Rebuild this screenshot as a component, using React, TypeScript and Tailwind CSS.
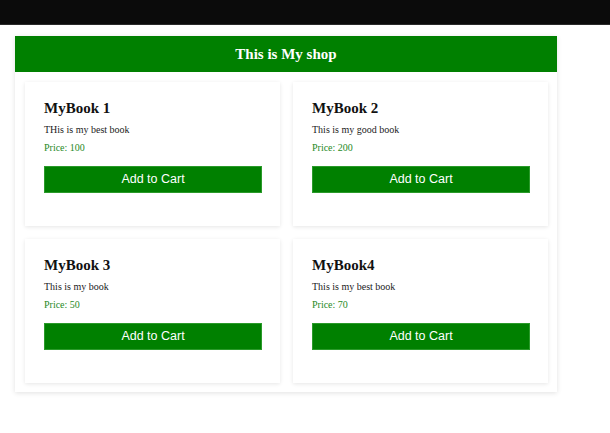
import React from "react";

const books = [
  { title: "MyBook 1", desc: "THis is my best book", price: 100 },
  { title: "MyBook 2", desc: "This is my good book", price: 200 },
  { title: "MyBook 3", desc: "This is my book", price: 50 },
  { title: "MyBook4", desc: "This is my best book", price: 70 },
];

export default function App() {
  return (
    <div className="w-[610px] h-[433px] bg-white overflow-hidden" style={{ fontFamily: '"Liberation Serif", serif' }}>
      <div className="h-[25px] bg-[#0b0b0b] border-b border-[#2a2a2a]" />
      <div className="pl-[15px] pt-[11px]">
        <div className="w-[542px] bg-white shadow-[0_1px_5px_rgba(0,0,0,0.12)]">
          <div className="h-[36px] bg-[#008000] flex items-center justify-center">
            <h1 className="text-white font-bold text-[15px] leading-none">This is My shop</h1>
          </div>
          <div className="grid grid-cols-[255px_255px] gap-[13px] pl-[10px] pt-[10px] pb-[9px]">
            {books.map((b) => (
              <div
                key={b.title}
                className="h-[144px] bg-white shadow-[0_1px_4px_rgba(0,0,0,0.1)] px-[19px] pt-[17px]"
              >
                <h2 className="text-[15px] font-bold leading-[18px] text-[#111]">{b.title}</h2>
                <p className="text-[10px] leading-[12px] mt-[7px] text-[#222]">{b.desc}</p>
                <p className="text-[10px] leading-[12px] mt-[6px] text-[#1f8a1f]">Price: {b.price}</p>
                <button
                  className="mt-[12px] w-[218px] h-[27px] bg-[#008000] border border-[#2a9a2a] text-white text-[12.5px] flex items-center justify-center"
                  style={{ fontFamily: '"Liberation Sans", Arial, sans-serif' }}
                >
                  Add to Cart
                </button>
              </div>
            ))}
          </div>
        </div>
      </div>
    </div>
  );
}
